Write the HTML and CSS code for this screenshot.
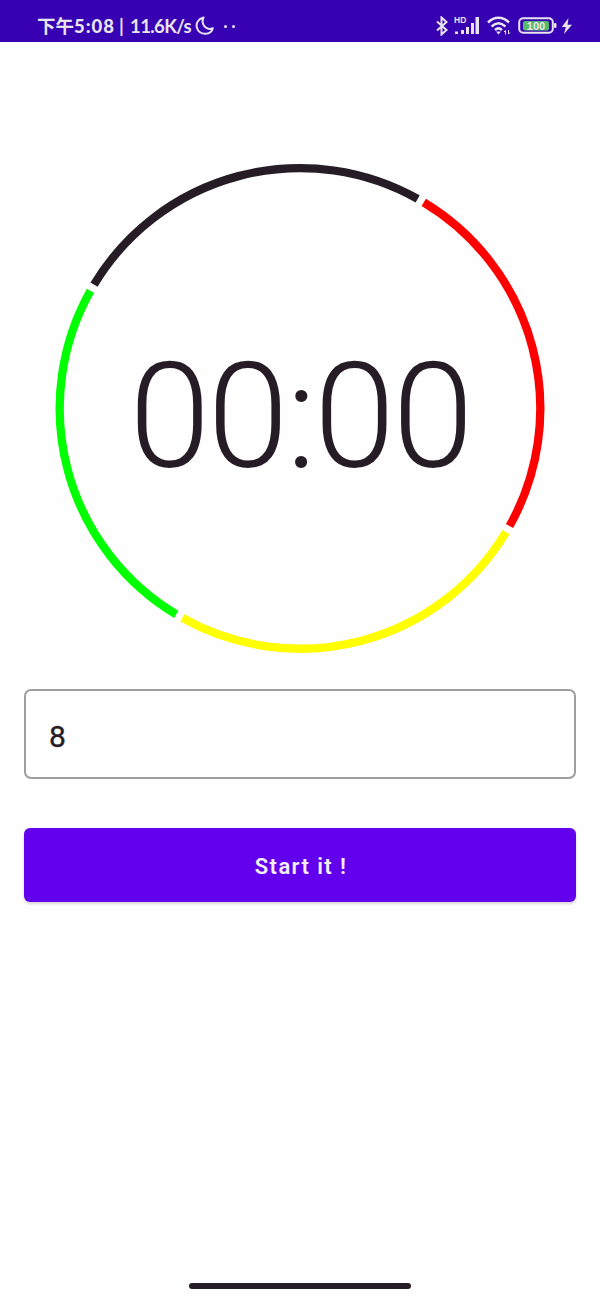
FILE: index.html
```html
<!DOCTYPE html>
<html lang="zh">
<head>
<meta charset="utf-8">
<title>Timer</title>
<link rel="stylesheet" href="styles.css">
</head>
<body>
<div class="screen">
  <header class="status">
    <div class="status-left">
      <div class="clock"><span class="hour">下午<b>5:08</b></span> <span class="bar">|</span> <span class="speed">11.6K/s</span></div>
      <svg class="moon" width="20" height="20" viewBox="0 0 20 20"><path d="M8.500 1.500C3.500 2.800.8 7 1.800 11.300c1 4.200 4.700 6.700 8.700 6.500 3.600-.2 6.500-2.200 7.300-5.600-3.300 1.300-6.300.6-8.300-1.800C7.500 8 7.100 4.600 8.500 1.500z"/></svg>
      <span class="dots"><i></i><i></i></span>
    </div>
    <div class="status-right">
      <svg width="12" height="20" viewBox="0 0 12 20"><path class="line" d="M1 5.500l9.500 8.500-5 4.500v-17l5 4.500L1 14.500"/></svg>
      <svg class="signal" width="26" height="20" viewBox="0 0 26 20"><text class="hd" x="0" y="7">HD</text><path class="fill" d="M1 15.500h3v2.500H1zM7 14h3v4H7zM12 11h3v7h-3zM17 7h3v11h-3zM21.500 1h3.500v17h-3.500z"/></svg>
      <svg class="wifi" width="24" height="20" viewBox="0 0 24 20"><path class="arcs" d="M1 6.500C7.500.2 15.500.2 22 6.500M4.500 10.500c4.500-4.200 9.500-4.200 14 0M8 14c2.200-2 4.800-2 7 0"/><path class="fill" d="M9 15.500h5L11.500 18.500z"/><path class="thin" d="M18.500 18.500v-4l-1.500 1.500M21.500 14v4l1.500-1.500"/></svg>
      <svg class="battery" width="39" height="20" viewBox="0 0 39 20"><rect class="line" x="1.200" y="2.200" width="33.600" height="14.600" rx="4"/><rect class="charge" x="5" y="5" width="26" height="9.500" rx="2"/><rect class="fill" x="36" y="7" width="2.500" height="5" rx="1"/><text class="pct" x="18" y="13.500">100</text></svg>
      <svg class="bolt" width="12" height="18" viewBox="0 0 12 18"><path class="fill" d="M7.500 1L.8 10h4L3 17l8-9.300H6.500z"/></svg>
    </div>
  </header>
  <main class="content">
    <div class="dial">
      <svg class="ring" width="490" height="490" viewBox="-245 -245.400 490 490">
        <circle class="arc red" r="240.300" pathLength="360" transform="rotate(-59)"/>
        <circle class="arc yellow" r="240.300" pathLength="360" transform="rotate(31)"/>
        <circle class="arc green" r="240.300" pathLength="360" transform="rotate(121)"/>
        <circle class="arc dark" r="240.300" pathLength="360" transform="rotate(211)"/>
      </svg>
      <div class="time">00:00</div>
    </div>
    <div class="field">8</div>
    <button class="start">Start it !</button>
  </main>
  <footer class="nav"><div class="handle"></div></footer>
</div>
</body>
</html>
```
FILE: styles.css
```css
* { box-sizing: border-box; }
body { margin: 0; background: #fefefe; font-family: Roboto, "Noto Sans CJK SC", sans-serif; color: #261c25; }
.screen { width: 600px; height: 1300px; display: flex; flex-direction: column; overflow: hidden; }
.status { height: 42px; background: #3700b3; color: #e8e4ee; display: flex; justify-content: space-between; padding: 10px 27px 0 37px; }
.status-left, .status-right { display: flex; align-items: center; height: 32px; }
.clock { display: flex; width: 158px; font: 700 18.500px/24px Lato, "Noto Sans CJK SC", sans-serif; white-space: nowrap; }
.hour { width: 82px; }
.hour b { letter-spacing: 1px; }
.bar { width: 11px; }
.speed { letter-spacing: -.6px; }
.moon { fill: none; stroke: #e8e4ee; stroke-width: 2; stroke-linejoin: round; }
.dots { display: flex; gap: 5px; margin-left: 9px; }
.dots i { width: 3px; height: 3px; border-radius: 50%; background: #e8e4ee; }
.line { fill: none; stroke: #e8e4ee; stroke-width: 2; }
.arcs { fill: none; stroke: #e8e4ee; stroke-width: 2.500; }
.thin { fill: none; stroke: #e8e4ee; stroke-width: 1; }
.fill { fill: #e8e4ee; }
.signal { margin-left: 6px; }
.wifi { margin-left: 7px; }
.battery { margin-left: 7px; }
.bolt { margin-left: 4px; }
.charge { fill: #55b96b; }
.hd { font: 700 8.500px "Liberation Sans", sans-serif; fill: #e8e4ee; }
.pct { font: 700 11px "Liberation Sans", sans-serif; fill: #e8e4ee; text-anchor: middle; }
.content { flex: 1; padding: 121px 24px 0; display: flex; flex-direction: column; }
.dial { height: 490px; display: grid; place-items: center; }
.ring, .time { grid-area: 1 / 1; }
.arc { fill: none; stroke-width: 8.300; stroke-dasharray: 88.300 271.700; }
.red { stroke: #ff0000; }
.yellow { stroke: #ffff00; }
.green { stroke: #00ff00; }
.dark { stroke: #261c25; }
.time { padding-top: 19px; font-size: 146px; font-weight: 300; line-height: 170px; letter-spacing: -2.600px; white-space: nowrap; }
.field { height: 90px; margin-top: 36px; border: 2px solid #a09da1; border-radius: 7px; padding: 3px 23px 0; font-size: 30px; line-height: 86px; -webkit-text-stroke: .4px #261c25; }
.start { height: 74px; margin-top: 49px; border: 0; border-radius: 6px; background: #6200ee; color: #f3effa; font: 600 22px/74px Roboto, sans-serif; letter-spacing: 1.400px; padding: 3px 0 0 2px; line-height: 71px; box-shadow: 0 2px 3px rgba(0,0,0,.16); }
.nav { height: 17px; display: flex; justify-content: center; }
.handle { width: 222px; height: 6px; border-radius: 3px; background: #261c25; }
```
